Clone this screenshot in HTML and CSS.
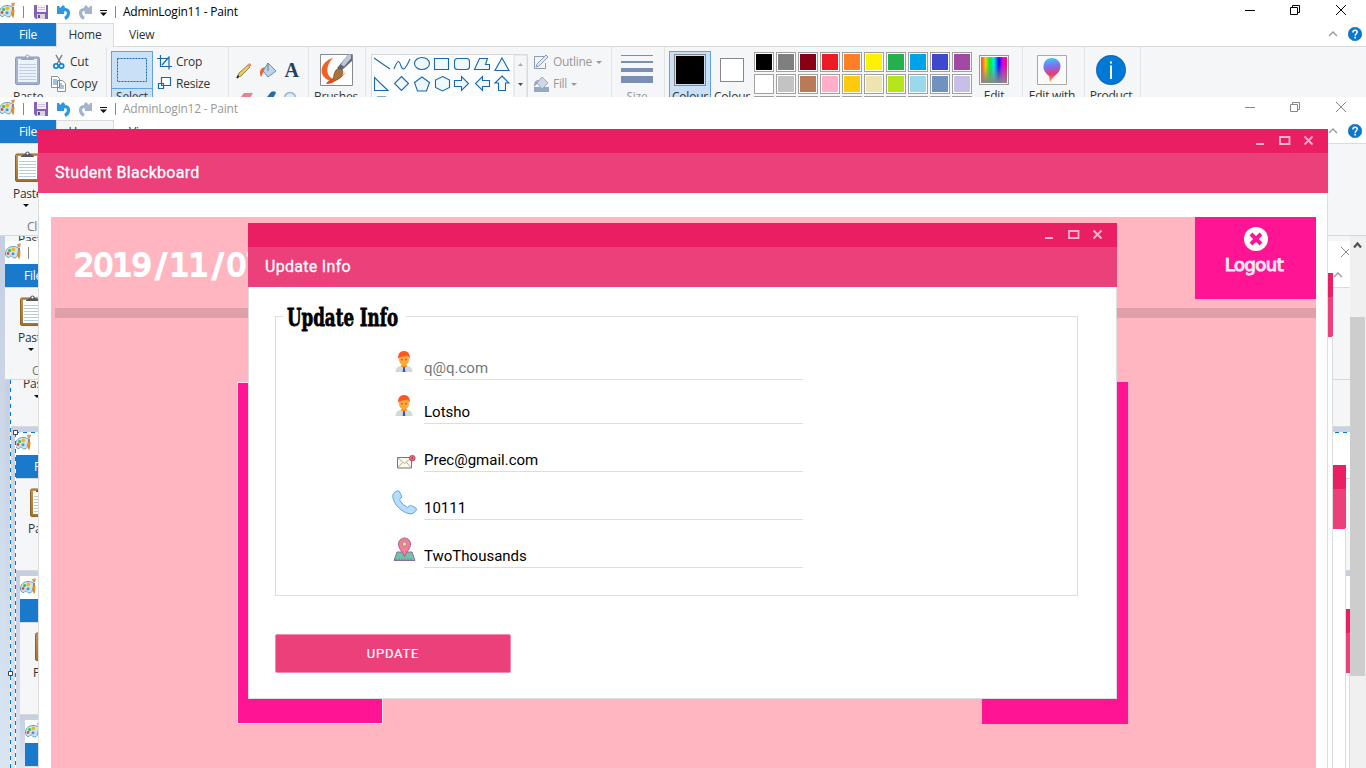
FILE: index.html
```html
<!DOCTYPE html>
<html lang="en">
<head>
<meta charset="utf-8">
<title>Student Blackboard</title>
<link rel="stylesheet" href="styles.css">
</head>
<body>
<svg class="defs" width="0" height="0" aria-hidden="true">
  <defs>
    <linearGradient id="g-wood" x1="0" y1="0" x2="0" y2="1"><stop offset="0" stop-color="#c2924f"/><stop offset="1" stop-color="#a4722f"/></linearGradient>
    <linearGradient id="g-rainbow"><stop offset="0" stop-color="#f33"/><stop offset=".17" stop-color="#fc0"/><stop offset=".34" stop-color="#0e2"/><stop offset=".5" stop-color="#0ee"/><stop offset=".68" stop-color="#11e"/><stop offset=".86" stop-color="#e0e"/><stop offset="1" stop-color="#f04"/></linearGradient>
    <linearGradient id="g-fade" x1="0" y1="0" x2="0" y2="1"><stop offset=".3" stop-color="#888" stop-opacity="0"/><stop offset="1" stop-color="#888"/></linearGradient>
    <linearGradient id="g-pin" x1=".3" y1="0" x2=".4" y2="1"><stop offset="0" stop-color="#3cc8f4"/><stop offset=".35" stop-color="#7b72ee"/><stop offset=".7" stop-color="#ec3a72"/><stop offset="1" stop-color="#f7b722"/></linearGradient>
  </defs>
  <symbol id="i-paint" viewBox="0 0 17 17">
    <path d="M0.5 11C0 7 3.500 3.500 8 3.500c4 0 6.500 1.500 6 4.500-.3 2-1.800 2-1.600 4 .1 2-1.900 3.500-3.900 2.800-1.500-.6-1.700-2-2.900-1.700-1 .2-1 1.800-2.600 1.400C1.500 14 .7 13 .5 11z" fill="#cbe6f3" stroke="#5f9fc2"/>
    <circle cx="3" cy="10.500" r="1.400" fill="#e04f3d"/><circle cx="4.600" cy="7.500" r="1.600" fill="#54b53b"/><circle cx="8.400" cy="6.400" r="1.800" fill="#f2b51e"/><circle cx="8" cy="10.800" r="1.500" fill="#4b95cc"/>
    <path d="M12 1l4-.5-1 4h-2z" fill="#d59a64"/><path d="M13 5h2v3h-2z" fill="#889"/><path d="M12.500 8h3L15 14l-1 2.500-1-2.500z" fill="#f08a1c"/>
  </symbol>
  <symbol id="i-save" viewBox="0 0 14 14"><path d="M0 0h14v14H2l-2-2z" fill="#8661b7"/><path d="M3 0h9v7H3z" fill="#f4f0f9"/><path d="M3 9h8v5H3z" fill="#d6d6df"/><path d="M4 10h2v3H4z" fill="#655080"/><path d="M4 2.500h7M4 4.500h7" stroke="#cfc1e4"/></symbol>
  <symbol id="i-undo" viewBox="0 0 14 15"><path d="M3 4.500h4.500c5.500 0 5 6.500.5 9" fill="none" stroke="currentColor" stroke-width="3.200"/><path d="M0 1h2l1 2 3-3 2 2-1 7H0z" fill="currentColor"/></symbol>
  <symbol id="i-menu" viewBox="0 0 7 6"><path d="M0 0h7v1H0zM0 2.500h7L3.500 6z" fill="#111"/></symbol>
  <symbol id="i-board" viewBox="0 0 25 31">
    <rect x=".5" y="3" width="24" height="27.500" rx="1.500" fill="var(--board)" stroke="var(--board-edge)"/>
    <path d="M3 5h19v23H3z" fill="var(--page)"/><path d="M4 10.500h17M4 13.500h17M4 16.500h17M4 19.500h17M4 22.500h17M4 25.500h17" stroke="var(--rule)"/>
    <path d="M6 6c0-2 3-2 4-3 .5-3.500 4.500-3.500 5 0 1 1 4 1 4 3z" fill="var(--clip)"/><circle cx="12.500" cy="2.500" r="1.100" fill="#fff"/>
  </symbol>
  <symbol id="i-help" viewBox="0 0 14 14"><circle cx="7" cy="7" r="6.800" fill="#0b78d0" stroke="#075c9f" stroke-width=".5"/><path d="M4.900 5.400c0-3 4.400-2.800 4.300-.3 0 1.600-2 1.700-2 3.600" fill="none" stroke="#fff" stroke-width="1.500"/><path d="M6.300 9.800h1.700v1.700H6.300z" fill="#fff"/></symbol>
  <symbol id="i-winbtns" viewBox="0 0 104 12"><path d="M0 6.500h10M45.500 3.500h7v7h-7zM47.500 3V1.500h7v7H53M91 1l10 10M101 1L91 11" fill="none" stroke="currentColor"/></symbol>
  <symbol id="i-matbtns" viewBox="0 0 58 12"><path d="M0 9h8" stroke="currentColor" stroke-width="2"/><path d="M24 2h9.500v7H24z" fill="none" stroke="currentColor" stroke-width="1.800"/><path d="M48.500 1.500l8 8M56.500 1.500l-8 8" stroke="currentColor" stroke-width="1.800"/></symbol>
  <symbol id="i-chev" viewBox="0 0 10 6"><path d="M1 5l4-4 4 4" fill="none" stroke="#999" stroke-width="1.300"/></symbol>
  <symbol id="i-user" viewBox="0 0 18 22">
    <path d="M.5 21c0-4 2.500-5.500 5.500-6h6c3 .5 5.500 2 5.500 6z" fill="#cfd8dc"/><path d="M6 14h6v1.500l-3 1.500-3-1.500z" fill="#ff9800"/><path d="M8.200 16h1.600l.5 5H7.700z" fill="#3f51b5"/>
    <ellipse cx="9" cy="8.500" rx="5" ry="6" fill="#ffa93a"/><path d="M3.300 8C2.500 3 5 0 9 0s6.500 3 5.700 8C14 6 13 5 11.500 4.500 8.500 6 5 5 3.300 8z" fill="#ff5722"/><circle cx="7" cy="8.700" r=".7" fill="#784719"/><circle cx="11" cy="8.700" r=".7" fill="#784719"/>
  </symbol>
</svg>

<main class="desktop">
  <section class="paint paint-front">
    <header class="titlebar"><svg class="ic-app"><use href="#i-paint"/></svg><i class="sep"></i><svg class="ic-save"><use href="#i-save"/></svg><svg class="ic-undo"><use href="#i-undo"/></svg><svg class="ic-redo"><use href="#i-undo"/></svg><svg class="ic-menu"><use href="#i-menu"/></svg><i class="sep sep-two"></i><span class="doc">AdminLogin11 - Paint</span><svg class="winbtns"><use href="#i-winbtns"/></svg></header>
    <nav class="tabs"><b class="file">File</b><span class="tab-on">Home</span><span class="tab">View</span><svg class="chev"><use href="#i-chev"/></svg><svg class="help"><use href="#i-help"/></svg></nav>
    <div class="ribbon">
      <div class="group clipboard pale">
        <div class="big"><svg class="board"><use href="#i-board"/></svg><span>Paste</span></div>
        <div class="stack">
          <span><svg viewBox="0 0 18 18"><path d="M6 2l5 9M12 2L7 11" stroke="#777f88" stroke-width="1.500"/><circle cx="6" cy="13" r="2.200" fill="none" stroke="#1685cf" stroke-width="1.700"/><circle cx="11.500" cy="13" r="2.200" fill="none" stroke="#1685cf" stroke-width="1.700"/></svg>Cut</span>
          <span><svg viewBox="0 0 18 18"><path d="M1.500 1.500h6l2 2v9h-8zM7.500 5.500h5l3 3v8h-8z" fill="#fff" stroke="#8a8d91"/><path d="M3 5h4M3 7h4M3 9h4M9 9h3M9 11h5M9 13h5" stroke="#4686ba"/></svg>Copy</span>
        </div>
      </div>
      <div class="group image">
        <div class="select"><svg viewBox="0 0 30 24"><path d="M.5.5h29v23H.5z" fill="none" stroke="#1769aa" stroke-dasharray="2 1"/></svg><span>Select</span></div>
        <div class="stack">
          <span><svg viewBox="0 0 18 18"><path d="M1 5.500h12v11M4.500 2v11.500H16M6 12l7.500-8.500" fill="none" stroke="#1769aa" stroke-width="1.200"/></svg>Crop</span>
          <span><svg viewBox="0 0 18 18"><path d="M5.500 2.500h9v8h-9zM2.500 8.500h5v5h-5z" fill="#fff" stroke="#1769aa" stroke-width="1.200"/></svg>Resize</span>
        </div>
      </div>
      <div class="group tools">
        <svg width="79" height="50" viewBox="229 47 79 50">
          <path d="M237 78l2-5 9-8 2 2-9 9z" fill="#f2cc50" stroke="#7a6c47" stroke-width=".8"/><path d="M247.500 65l2-2 2 2-2 2z" fill="#e5857b"/><path d="M237 78l1.500-2.500" stroke="#222" stroke-width="1.500"/>
          <path d="M261 77c-3-7 1-10 6-10l-3 4z" fill="#ec6430"/><path d="M268 63l8 8-8 6-5-6z" fill="#b9d6ec" stroke="#6b91ad"/><path d="M268 63v8" stroke="#777"/>
          <text x="284.500" y="77" class="tool-a">A</text>
          <path d="M240 98l4-5h9l-3 5z" fill="#e6838d"/><path d="M267 97l4-5q4-2 5 1l-3 5z" fill="#246bae"/><circle cx="290" cy="98" r="5.500" fill="#d7ebf8" stroke="#a6b1bd" stroke-width="1.500"/>
        </svg>
      </div>
      <div class="group brushes">
        <svg width="33" height="32" viewBox="0 0 33 32"><path d="M.5.5h32v31H.5z" fill="#fff" stroke="#8b8b8b"/><path d="M17 14L28 1h4v6L21 17z" fill="#60687c"/><path d="M27 1l4-.5v4l-7 8-3-2z" fill="#bcc6d6"/><path d="M13 4C4 6-2 16 4 23s19 3 22-6c-4 7-12 10-16 6S6 11 13 4z" fill="#f16024"/><path d="M12 27c2-2 1-7 4-11 4-3 9 0 6 5-2 4-6 6-10 6z" fill="#a8733e" stroke="#66421f" stroke-width=".6"/><path d="M6 30q4-7 10-4-3 4-10 4z" fill="#e64b1b"/></svg>
        <span>Brushes</span>
      </div>
      <div class="group shapes">
        <svg width="157" height="43" viewBox="371 54 157 43">
          <path d="M371.500 54.500h156V98h-156z" fill="#fcfdfe" stroke="#d5d9de"/><path d="M514 55h13v43h-13z" fill="#f5f6f7" stroke="#d9dde1"/>
          <g class="shape">
            <path d="M374 58l16 11"/><path d="M394 69c4-10 5-9 7-3s5 2 9-7"/><ellipse cx="422" cy="63.500" rx="7.500" ry="6"/><path d="M434.500 58.500h14v11h-14z"/><rect x="454.500" y="58.500" width="15" height="11" rx="3"/><path d="M479.500 58.500h8l-2 6h4v5h-15z"/><path d="M502 58l7 12.500h-14z"/>
            <path d="M374.500 77.500v13H388z"/><path d="M401.500 76.500l7 7-7 7-7-7z"/><path d="M422 77l7.500 5.500-3 8.500h-9l-3-8.500z"/><path d="M442.500 76.500l7 3.500v7.500l-7 3.500-7-3.500V80z"/><path d="M454.500 80.500h7v-4l7 7-7 7v-4h-7z"/><path d="M489.500 80.500h-7v-4l-7 7 7 7v-4h7z"/><path d="M502 76l7 7h-3.500v7.500h-7V83H495z"/>
            <path d="M377 97h9"/>
          </g>
          <path d="M518 66h5l-2.500-3z" fill="#aaa"/><path d="M518 83h5l-2.500 3z" fill="#445064"/>
        </svg>
        <div class="stack dim">
          <span><svg viewBox="0 0 18 18"><path d="M13 3.500H1.500v12h11V10" fill="none" stroke="#8c9bb8"/><path d="M3 14l1-3 9-9 2 2-9 9z" fill="#e3e7ee" stroke="#8c9bb8"/></svg>Outline<i></i></span>
          <span><svg viewBox="0 0 18 18"><path d="M1 12h15v5H1z" fill="#98a7c2"/><path d="M9 2l6 6-6 6-5-6z" fill="#d1d8e5" stroke="#98a7c2"/><path d="M1 12c0-5 1-7 5-7L4 9z" fill="#98a7c2"/></svg>Fill<i></i></span>
        </div>
      </div>
      <div class="group size"><div class="lines"><i></i><i></i><i></i><i></i></div><span>Size</span></div>
      <div class="group colours">
        <div class="colour one"><i></i><span>Colour</span></div>
        <div class="colour two"><i></i><span>Colour</span></div>
        <div class="palette"><i class="c1"></i><i class="c2"></i><i class="c3"></i><i class="c4"></i><i class="c5"></i><i class="c6"></i><i class="c7"></i><i class="c8"></i><i class="c9"></i><i class="c10"></i><i class="c11"></i><i class="c12"></i><i class="c13"></i><i class="c14"></i><i class="c15"></i><i class="c16"></i><i class="c17"></i><i class="c18"></i><i class="c19"></i><i class="c20"></i><i></i><i></i><i></i><i></i><i></i><i></i><i></i><i></i><i></i><i></i></div>
        <div class="tile edit"><svg viewBox="0 0 29 29"><path d="M.5.500h28v28H.5z" fill="#fff" stroke="#999"/><path d="M2 2h25v25H2z" fill="url(#g-rainbow)"/><path d="M2 2h25v25H2z" fill="url(#g-fade)"/></svg><span>Edit</span></div>
      </div>
      <div class="group tile shift"><svg viewBox="0 0 30 30"><path d="M.5.500h29v29H.5z" fill="#fafafa" stroke="#aaa"/><path d="M15 3c5 0 9 4 8.500 9-.5 7-7 8-10.500 15-1-2 0-4-1-6-3-3-6-5-5.500-10C7 6 10 3 15 3z" fill="url(#g-pin)"/></svg><span>Edit with</span></div>
      <div class="group tile shift"><svg viewBox="0 0 30 30"><circle cx="15" cy="15" r="14.700" fill="#0078d7" stroke="#07508c" stroke-width=".6"/><path d="M15 10.500V24M15 6.500v2" stroke="#fff" stroke-width="2"/></svg><span>Product</span></div>
    </div>
  </section>

  <section class="paint paint-back">
    <header class="titlebar"><svg class="ic-app"><use href="#i-paint"/></svg><i class="sep"></i><svg class="ic-save"><use href="#i-save"/></svg><svg class="ic-undo"><use href="#i-undo"/></svg><svg class="ic-redo"><use href="#i-undo"/></svg><svg class="ic-menu"><use href="#i-menu"/></svg><i class="sep sep-two"></i><span class="doc">AdminLogin12 - Paint</span><svg class="winbtns"><use href="#i-winbtns"/></svg></header>
    <nav class="tabs"><b class="file">File</b><span class="tab-on">Home</span><span class="tab">View</span><svg class="chev"><use href="#i-chev"/></svg><svg class="help"><use href="#i-help"/></svg></nav>
    <div class="mini-ribbon"><svg class="board"><use href="#i-board"/></svg><span>Paste</span><i class="drop"></i><em>Clipboard</em></div>
    <div class="canvas"></div>
  </section>

  <div class="strip strip-a"><span>Paste</span></div>
  <section class="paint nest n1"><header class="titlebar"><svg class="ic-app"><use href="#i-paint"/></svg><i class="sep"></i><svg class="nest-x" viewBox="0 0 8 10"><path d="M0 0l10 10M0 10L10 0" stroke="#888"/></svg></header><nav class="tabs"><b class="file">File</b><svg class="chev"><use href="#i-chev"/></svg></nav><div class="mini-ribbon"><svg class="board"><use href="#i-board"/></svg><span>Paste</span><i class="drop"></i><em>Clipboard</em></div><div class="canvas"></div></section>
  <div class="strip strip-b"><span>Paste</span><i class="drop"></i></div>
  <div class="mat-stub s1"></div>
  <section class="paint nest n2"><header class="titlebar"><svg class="ic-app"><use href="#i-paint"/></svg></header><nav class="tabs"><b class="file">File</b></nav><div class="mini-ribbon"><svg class="board"><use href="#i-board"/></svg><span>Paste</span></div><div class="canvas"></div></section>
  <div class="mat-stub s2"></div>
  <section class="paint nest n3"><header class="titlebar"><svg class="ic-app"><use href="#i-paint"/></svg></header><nav class="tabs"><b class="file"></b></nav><div class="mini-ribbon"><svg class="board"><use href="#i-board"/></svg><span>Paste</span></div><div class="canvas"></div></section>
  <div class="mat-stub s3"></div>
  <section class="paint nest n4"><header class="titlebar"><svg class="ic-app"><use href="#i-paint"/></svg></header><nav class="tabs"><b class="file"></b></nav><div class="mini-ribbon"></div></section>
  <svg class="marquee" width="1366" height="390" viewBox="0 378 1366 390"><path d="M10.500 380v388M15.500 433v335M15 432.500h1334" stroke="#fff"/><path d="M10.500 380v388M15.500 433v335M15 432.500h1334" stroke="#0078d7" stroke-dasharray="4 4"/><path d="M13.500 430.500h4v4h-4zM8.500 671.500h4v4h-4z" fill="#fff" stroke="#444"/></svg>

  <aside class="scroll"><svg viewBox="0 0 16 16"><path d="M4 11.500l3.500-4 3.500 4" fill="none" stroke="#505050" stroke-width="2.200"/></svg><div class="thumb"></div></aside>

  <section class="mat blackboard">
    <div class="mat-bar"><svg class="matbtns"><use href="#i-matbtns"/></svg></div>
    <h1 class="mat-title">Student Blackboard</h1>
    <div class="board-body">
      <div class="top"><div class="date">2019<u>/</u>11<u>/</u>07</div>
        <div class="logout"><svg viewBox="0 0 24 24"><circle cx="12" cy="12" r="12" fill="#fff"/><path d="M7 7l10 10M17 7L7 17" stroke="#ff1493" stroke-width="4"/></svg><span>Logout</span></div></div>
      <div class="rule"></div>
      <div class="cards"><div class="card left"></div><div class="card right"></div></div>
    </div>
  </section>

  <section class="mat dialog">
    <div class="mat-bar"><svg class="matbtns"><use href="#i-matbtns"/></svg></div>
    <h2 class="mat-title">Update Info</h2>
    <form class="form">
      <div class="box">
        <div class="legend"><span>Update Info</span></div>
        <div class="row"><svg class="user"><use href="#i-user"/></svg><div class="field muted">q@q.com</div></div>
        <div class="row"><svg class="user"><use href="#i-user"/></svg><div class="field">Lotsho</div></div>
        <div class="row tall"><svg class="mail" viewBox="0 0 19 14"><path d="M.5 2.500h14v10.500H.5z" fill="#fdf8e8" stroke="#777"/><path d="M1 3l6.500 5.500L14 3M1 12.500l4.500-5M14 12.500l-4.500-5" fill="none" stroke="#999" stroke-width=".8"/><circle cx="15.300" cy="3.200" r="2.900" fill="#f06480" stroke="#9c5163" stroke-width=".7"/><path d="M15.300 1.800v2.800" stroke="#803044" stroke-width=".7"/></svg><div class="field">Prec@gmail.com</div></div>
        <div class="row tall"><svg class="phone" viewBox="0 0 25 25"><path d="M3.500 1.500L6 .8q1 0 1.500 1L9.500 6q.4 1-.5 2L7.500 9.500q2.500 5.500 8 8l2-1.700q1-.7 2-.2l4.300 2.400q1 .8.500 2-1.800 4-6.300 4C9 22 1.500 14 .7 6.500q0-3 2.800-5z" fill="#b6dcfe" stroke="#6ba3d8"/></svg><div class="field">10111</div></div>
        <div class="row tall"><svg class="pin" viewBox="0 0 23 25"><path d="M4 15h15l3 8.500H1z" fill="#6fc4a9" stroke="#8d70a0"/><path d="M3 21.500v2M6 21.500v2M9 21.500v2M12 21.500v2M15 21.500v2M18 21.500v2" stroke="#4d7793" stroke-width=".8"/><path d="M11.500 20C10 15 5.500 12 5.500 7a6 6 0 0112 0c0 5-4.500 8-6 13z" fill="#f47c9c" stroke="#a06690"/><circle cx="11.500" cy="7" r="2.200" fill="#f9dc8f" stroke="#a5778d" stroke-width=".8"/></svg><div class="field">TwoThousands</div></div>
      </div>
      <button class="update" type="button">UPDATE</button>
    </form>
  </section>
</main>
</body>
</html>
```
FILE: styles.css
```css
* { box-sizing: border-box; }
body { margin: 0; background: #fff; }
i, em, b, u { font-style: normal; font-weight: 400; text-decoration: none; }
svg { display: block; flex: none; overflow: hidden; }
.defs { position: absolute; }
.desktop { position: relative; width: 1366px; height: 768px; overflow: hidden; font: 12px/16px "Open Sans", "Noto Sans", sans-serif; letter-spacing: -.22px; color: #333; }

/* Paint windows */
.paint { position: absolute; overflow: hidden; background: #fff; --board: url(#g-wood); --board-edge: #8d6229; --page: #fff; --rule: #b5ccd5; --clip: #55595e; }
.paint-front { left: 0; top: 0; width: 1366px; height: 97px; }
.paint-back { left: 0; top: 97px; width: 1366px; height: 671px; display: flex; flex-direction: column; }
.titlebar { display: flex; flex: none; align-items: center; height: 23px; }
.ic-app { width: 17px; height: 17px; margin: -3px 0 0 -1px; }
.nest .ic-app { margin: -2px -1px 0 0; }
.sep { width: 1px; height: 12px; background: #888; margin: 0 10px 0 7px; }
.ic-save { width: 14px; height: 14px; margin-top: 1px; }
.ic-undo, .ic-redo { width: 14px; height: 15px; margin: 1px 0 0 9px; color: #2e97e2; }
.ic-redo { margin-left: 7px; transform: scaleX(-1); color: #a5b4ca; }
.ic-menu { width: 7px; height: 6px; margin: 3px 0 0 8px; }
.sep-two { margin: 0 7px 0 8px; }
.doc { color: #000; }
.paint-back .doc { color: #999; }
.winbtns { width: 104px; height: 12px; margin: -3px 17px 0 auto; color: #000; }
.paint-back .winbtns { color: #888; }
.tabs { display: flex; flex: none; height: 24px; border-bottom: 1px solid #dadbdc; }
.file { width: 56px; height: 23px; background: #1979ca; color: #fff; text-align: center; line-height: 24px; }
.tab-on { width: 58px; height: 24px; background: #f5f6f7; border: 1px solid #dadbdc; border-bottom: 0; text-align: center; line-height: 22px; }
.tab { padding-left: 15px; line-height: 24px; }
.chev { width: 10px; height: 6px; margin: 8px 10px 0 auto; }
.help { width: 14px; height: 14px; margin: 4px 4px 0 0; }
.ribbon { display: grid; grid-template-columns: 107px 122px 80px 57px 246px 53px 358px 62px 56px; height: 50px; background: #f5f6f7; overflow: hidden; }
.group { display: flex; position: relative; height: 80px; border-right: 1px solid #e2e3e4; }
.pale { --board: #a3b1cd; --board-edge: #8d9cbc; --page: #edf2fa; --rule: #c0cee3; --clip: #9aa7c0; }
.board { width: 25px; height: 31px; margin-left: 2px; }
.big { width: 52px; padding: 7px 0 0 13px; }
.big span { display: block; margin-top: 4px; letter-spacing: -.05px; }
.stack { padding-top: 6px; }
.stack span { display: flex; align-items: center; gap: 2px; height: 18px; margin-bottom: 4px; }
.clipboard .stack, .image .stack { margin-left: -2px; }
.stack svg { width: 18px; height: 18px; }
.select { width: 42px; height: 66px; margin: 4px 5px 0 4px; border: 1px solid #62a2e4; background: #c9e0f7; text-align: center; }
.select svg { width: 30px; height: 24px; margin: 6px 5px 6px; }
.select span { display: block; border-top: 1px solid #62a2e4; line-height: 16px; }
.tool-a { font: bold 20px "Liberation Serif", serif; fill: #23405f; }
.brushes { flex-direction: column; align-items: center; padding: 7px 2px 0 0; }
.brushes span { margin-top: 3px; }
.shapes { padding: 7px 0 0 5px; gap: 5px; }
.shapes .stack { padding-top: 0; margin-top: -1px; }
.shape { fill: #eff8fc; stroke: #1b68ad; stroke-width: 1.1; }
.shape path:nth-child(-n+2) { fill: none; }
.dim { color: #999; }
.dim i { border: 3px solid transparent; border-top-color: #999; margin: 3px 0 0 2px; }
.dim span { letter-spacing: -.3px; }
.size { flex-direction: column; align-items: center; color: #999; padding: 8px 2px 0 0; }
.lines { display: grid; gap: 5px; width: 32px; margin-bottom: 5px; }
.lines i { background: #7b8fb2; height: 1px; }
.lines i:nth-child(2) { height: 2px; }
.lines i:nth-child(3) { height: 4px; }
.lines i:nth-child(4) { height: 7px; margin-top: -1px; }
.size span { margin-top: 1px; }
.colours { padding-left: 4px; }
.colour { width: 42px; margin-top: 4px; display: flex; flex-direction: column; align-items: center; }
.colour span { margin-top: 3px; }
.one { border: 1px solid #62a2e4; background: #c9e0f7; }
.one i { width: 32px; height: 32px; margin-top: 2px; background: #000; border: 1px solid #888; box-shadow: inset 0 0 0 1px #c9e0f7; }
.two i { width: 24px; height: 24px; margin: 7px 0 4px; background: #fff; border: 1px solid #888; }
.palette { display: grid; grid-template-columns: repeat(10, 20px); grid-auto-rows: 20px; gap: 2px; margin: 5px 7px 0 1px; }
.palette i { border: 1px solid #a0a0a0; box-shadow: inset 0 0 0 1px #fff; background: #fff; }
.palette .c1 { background: #000; } .palette .c2 { background: #7f7f7f; } .palette .c3 { background: #880015; } .palette .c4 { background: #ed1c24; } .palette .c5 { background: #ff7f27; }
.palette .c6 { background: #fff200; } .palette .c7 { background: #22b14c; } .palette .c8 { background: #00a2e8; } .palette .c9 { background: #3f48cc; } .palette .c10 { background: #a349a4; }
.palette .c12 { background: #c3c3c3; } .palette .c13 { background: #b97a57; } .palette .c14 { background: #ffaec9; } .palette .c15 { background: #ffc90e; }
.palette .c16 { background: #efe4b0; } .palette .c17 { background: #b5e61d; } .palette .c18 { background: #99d9ea; } .palette .c19 { background: #7092be; } .palette .c20 { background: #c8bfe7; }
.tile { display: flex; flex-direction: column; align-items: center; padding-top: 8px; white-space: nowrap; }
.tile svg { width: 30px; height: 30px; margin-bottom: 3px; }
.shift { padding-right: 3px; }

/* Partly covered Paint windows */
.mini-ribbon { flex: none; display: flex; flex-direction: column; align-items: flex-start; height: 92px; padding: 7px 0 0 13px; background: #f5f6f7; border-bottom: 1px solid #d5d8dc; overflow: hidden; }
.mini-ribbon span { margin-top: 4px; letter-spacing: -.3px; }
.drop { flex: none; width: 6px; border: 3px solid transparent; border-top-color: #111; border-bottom: 0; margin: 2px 0 0 10px; }
.mini-ribbon em { margin: 12px 0 0 14px; color: #777; }
.canvas { flex: 1; background: linear-gradient(#c6cfe1, #dae5f2); }
.nest { display: flex; flex-direction: column; }
.n1 { left: 5px; top: 241px; width: 1345px; height: 527px; }
.nest-x { width: 8px; height: 10px; margin: -2px 1px 0 auto; }
.n1 .chev { margin: 8px 7px 0 auto; }
.n2 { left: 15px; top: 432px; width: 1335px; height: 336px; }
.n3 { left: 20px; top: 576px; width: 1330px; height: 192px; }
.n4 { left: 25px; top: 720px; width: 1325px; height: 48px; }
.strip { position: absolute; background: #f5f6f7; overflow: hidden; }
.strip span { display: block; }
.strip-a { left: 5px; top: 236px; width: 1345px; height: 5px; padding-left: 13px; }
.strip-a span { margin-top: -4px; }
.strip-b { left: 11px; top: 380px; width: 1339px; height: 47px; padding-left: 12px; border-bottom: 1px solid #d5d8dc; }
.strip-b span { margin-top: -4px; }
.strip-b .drop { display: block; margin: 3px 0 0 11px; }
.mat-stub { position: absolute; z-index: 1; background: linear-gradient(#e91e63 24px, #ec407a 24px, #ec407a 64px, #fff 64px); border-image: linear-gradient(#e91e63 24px, #ec407a 24px, #ec407a 64px, #ddd 64px) 1; border-width: 0 1px 0 0; border-style: solid; }
.s1 { left: 1300px; top: 273px; width: 33px; height: 495px; }
.s2 { left: 1333px; top: 465px; width: 13px; height: 303px; }
.s3 { left: 1346px; top: 609px; width: 4px; height: 159px; }
.marquee { position: absolute; left: 0; top: 378px; }
.scroll { position: absolute; left: 1350px; top: 236px; width: 16px; height: 532px; background: #f0f0f0; }
.scroll svg { width: 16px; height: 16px; }
.thumb { width: 15px; height: 359px; margin-top: 65px; background: #cdcdcd; }

/* Material windows */
.mat { position: absolute; z-index: 2; background: #fff; font-family: Roboto, sans-serif; letter-spacing: 0; }
.mat-bar { display: flex; justify-content: flex-end; height: 24px; background: #e91e63; color: #f8b4ca; padding: 6px 14px 0 0; }
.matbtns { width: 58px; height: 12px; }
.mat-title { margin: 0; height: 40px; padding-left: 17px; background: #ec407a; color: #fff; font-weight: 400; font-size: 16px; line-height: 39px; letter-spacing: .3px; -webkit-text-stroke: .3px #fff; }
.blackboard { left: 38px; top: 129px; width: 1290px; height: 639px; }
.board-body { height: 575px; border: solid #ddd; border-width: 0 1px; padding: 24px 11px 0 12px; background: #ffb6c1; background-clip: content-box; }
.top { display: flex; justify-content: space-between; height: 91px; }
.date { padding: 24px 0 0 23px; color: #fff; font: 32px/48px "DejaVu Sans", sans-serif; letter-spacing: -1.2px; -webkit-text-stroke: 2px #fff; }
.date u { padding: 0 4px 0 5px; }
.logout { display: flex; flex-direction: column; align-items: center; width: 121px; height: 82px; padding-top: 10px; background: #ff1493; color: #f3e6ee; font: 18px/26px "DejaVu Sans", sans-serif; letter-spacing: -.5px; -webkit-text-stroke: 1.1px #f3e6ee; }
.logout svg { width: 24px; height: 24px; margin-bottom: 1px; }
.logout span { margin-right: 3px; }
.rule { height: 10px; margin-left: 4px; background: #e0a0a9; }
.cards { display: flex; justify-content: space-between; padding: 64px 188px 0 186px; }
.card { width: 146px; height: 342px; background: #ff1493; }
.card.left { border: 1px solid #ffe3ee; }
.dialog { left: 248px; top: 223px; width: 869px; height: 476px; }
.form { height: 412px; border: 1px solid #ddd; border-top: 0; padding: 29px 38px 0 26px; }
.box { height: 280px; border: 1px solid #ddd; padding: 1px 0 0 116px; }
.legend { width: 123px; height: 30px; margin: -16px 0 16px -109px; background: #fff; }
.legend span { display: inline-block; margin-left: 4px; color: #000; font: bold 24px/32px "DejaVu Serif", serif; white-space: nowrap; transform: scaleX(.695); transform-origin: left; -webkit-text-stroke: .8px #000; }
.row { display: flex; align-items: flex-end; height: 44px; }
.row.tall { height: 48px; }
.row:nth-child(2) { height: 32px; }
.row svg { width: 25px; height: 25px; margin: 0 1px 5px 0; }
.row .user { width: 18px; height: 22px; margin: 0 5px 7px 3px; }
.row .mail { width: 19px; height: 14px; margin: 0 2px 3px 5px; }
.row .pin { width: 23px; margin: 0 2px 6px 1px; }
.field { width: 379px; margin-left: 6px; border-bottom: 1px solid #ddd; padding-bottom: 1px; color: #000; font-size: 15px; line-height: 20px; }
.muted { color: #777; }
.update { display: block; width: 236px; height: 39px; margin-top: 38px; padding: 0; border: 1px solid #f28aad; border-radius: 2px; background: #ec407a; color: #fff; font: 400 13px Roboto, sans-serif; letter-spacing: .8px; -webkit-text-stroke: .2px #fff; }
```
